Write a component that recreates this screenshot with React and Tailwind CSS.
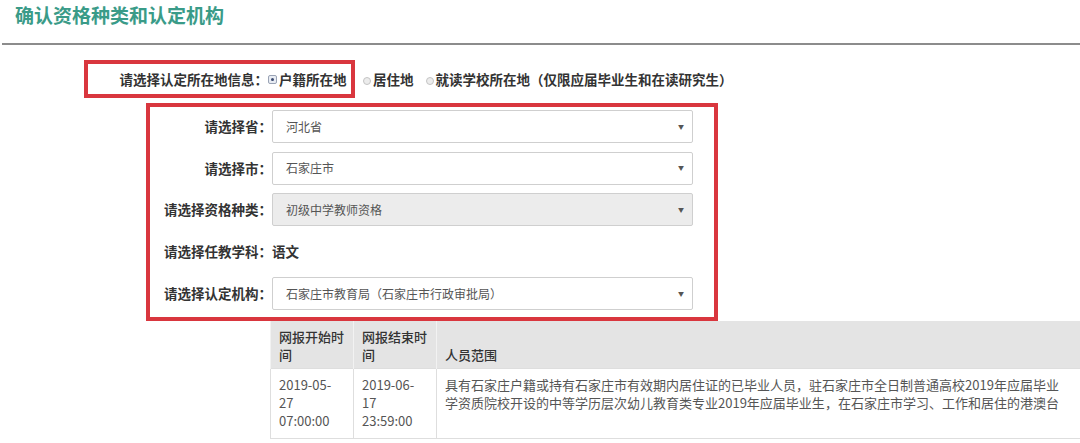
import React from 'react';

const font = "font-['Noto_Sans_CJK_SC','Noto_Sans',sans-serif]";

// full-width punctuation kept at a full em, as in the original page
const Open = ({ children = '（' }) => <span className="inline-block w-[1em] text-right">{children}</span>;
const Close = ({ children = '）' }) => <span className="inline-block w-[1em] text-left">{children}</span>;

const Radio = ({ checked }) =>
  checked ? (
    <span className="inline-flex h-[9px] w-[9px] items-center justify-center rounded-[2px] border border-[#9aa3b5] bg-[#e8ecf3]">
      <span className="h-[3px] w-[3px] rounded-full bg-[#3a4a70]" />
    </span>
  ) : (
    <span className="inline-block h-[8px] w-[8px] rounded-full border border-[#c4c4c4] bg-[#ececec]" />
  );

const Select = ({ children, disabled }) => (
  <div
    className={`flex h-[33px] w-[421px] items-center justify-between rounded-[2px] border border-[#cfcfcf] pl-[13px] pr-[8px] text-[12px] text-[#555] ${
      disabled ? 'bg-[#ececec]' : 'bg-white'
    }`}
  >
    <span className="whitespace-nowrap">{children}</span>
    <span className="text-[6px] leading-none text-[#555]">▼</span>
  </div>
);

const FormRow = ({ label, children }) => (
  <div className="flex h-[33px] items-center">
    <div className="w-[122px] whitespace-nowrap text-right text-[13.5px] font-semibold text-[#333]">
      {label}
      <Close>：</Close>
    </div>
    {children}
  </div>
);

export default function App() {
  return (
    <div className={`h-[443px] w-[1080px] overflow-hidden bg-white ${font}`}>
      {/* Title */}
      <div className="h-[43px] pl-[15px] pt-[2px]">
        <h1 className="text-[19px] font-bold leading-[26px] text-[#3a9b88]">确认资格种类和认定机构</h1>
      </div>
      <div className="ml-[2px] h-[2px] bg-[#8c8c8c]" />

      <div className="pt-[15px]">
        {/* Location type */}
        <div className="flex items-center whitespace-nowrap text-[13.5px] font-semibold text-[#333]">
          <div className="ml-[84px] flex h-[38px] w-[271px] items-center border-4 border-[#d9363e]">
            <div className="w-[180px] text-right">
              请选择认定所在地信息<Close>：</Close>
            </div>
            <Radio checked />
            <span className="ml-[2px]">户籍所在地</span>
          </div>
          <span className="ml-[8px]"><Radio /></span>
          <span className="ml-[2px]">居住地</span>
          <span className="ml-[12px]"><Radio /></span>
          <span className="ml-[2px]">
            就读学校所在地<Open />仅限应届毕业生和在读研究生<Close />
          </span>
        </div>

        {/* Selection box */}
        <div className="ml-[146px] mt-[5px] w-[572px] border-4 border-[#d9363e]">
          <div className="flex flex-col gap-[8.5px] pb-[7px] pt-[3px]">
            <FormRow label="请选择省">
              <Select>河北省</Select>
            </FormRow>
            <FormRow label="请选择市">
              <Select>石家庄市</Select>
            </FormRow>
            <FormRow label="请选择资格种类">
              <Select disabled>初级中学教师资格</Select>
            </FormRow>
            <div className="flex h-[34px] items-center text-[13.5px] font-semibold text-[#333]">
              <div className="w-[122px] whitespace-nowrap text-right">
                请选择任教学科<Close>：</Close>
              </div>
              <span>语文</span>
            </div>
            <FormRow label="请选择认定机构">
              <Select>
                石家庄市教育局<Open />石家庄市行政审批局<Close />
              </Select>
            </FormRow>
          </div>
        </div>

        {/* Schedule table */}
        <table className="ml-[270px] w-[900px] table-fixed border-collapse text-[13px] leading-[18px]">
          <colgroup>
            <col className="w-[83px]" />
            <col className="w-[83px]" />
            <col />
          </colgroup>
          <thead>
            <tr className="bg-[#e4e4e4] text-left text-[#333]">
              <th className="h-[47px] whitespace-nowrap border-x border-[#f2f2f2] px-[8px] pb-[4px] pt-[6px] align-bottom font-medium">网报开始时<br />间</th>
              <th className="whitespace-nowrap border-x border-[#f2f2f2] px-[8px] pb-[4px] pt-[6px] align-bottom font-medium">网报结束时<br />间</th>
              <th className="border-x border-[#f2f2f2] px-[8px] pb-[4px] pt-[6px] align-bottom font-medium">人员范围</th>
            </tr>
          </thead>
          <tbody className="text-[#555]">
            <tr>
              <td className="h-[70px] border border-[#dedede] px-[8px] pt-[7px] align-top">2019-05-<br />27<br />07:00:00</td>
              <td className="border border-[#dedede] px-[8px] pt-[7px] align-top">2019-06-<br />17<br />23:59:00</td>
              <td className="whitespace-nowrap border border-[#dedede] px-[8px] pt-[7px] align-top">
                具有石家庄户籍或持有石家庄市有效期内居住证的已毕业人员<Close>，</Close>驻石家庄市全日制普通高校2019年应届毕业<br />
                学资质院校开设的中等学历层次幼儿教育类专业2019年应届毕业生<Close>，</Close>在石家庄市学习、工作和居住的港澳台
              </td>
            </tr>
          </tbody>
        </table>
      </div>
    </div>
  );
}
